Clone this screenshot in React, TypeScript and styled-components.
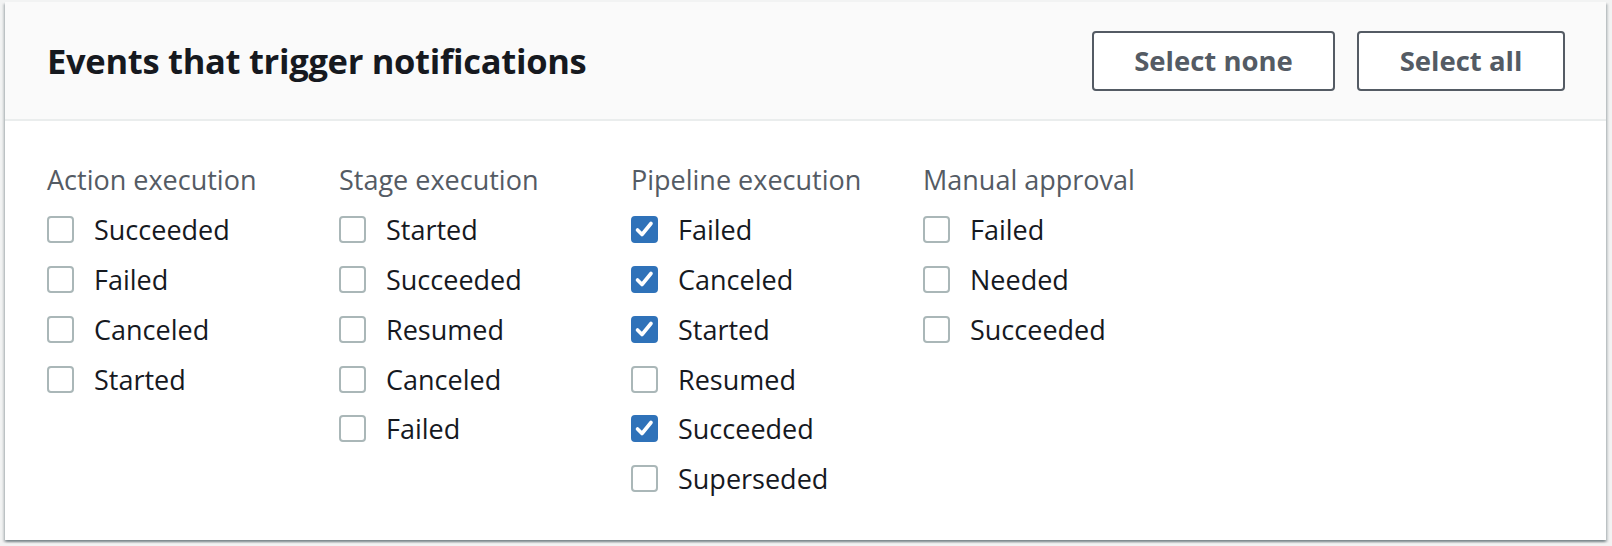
import styled, { createGlobalStyle } from "styled-components";

const GlobalStyle = createGlobalStyle`
  html, body {
    margin: 0;
    padding: 0;
    background: #f2f3f3;
  }
  body {
    font-family: "Open Sans", "Noto Sans", "Liberation Sans", Arial, sans-serif;
    -webkit-font-smoothing: antialiased;
  }
`;

interface EventGroup {
  title: string;
  events: { label: string; checked: boolean }[];
}

const groups: EventGroup[] = [
  {
    title: "Action execution",
    events: [
      { label: "Succeeded", checked: false },
      { label: "Failed", checked: false },
      { label: "Canceled", checked: false },
      { label: "Started", checked: false },
    ],
  },
  {
    title: "Stage execution",
    events: [
      { label: "Started", checked: false },
      { label: "Succeeded", checked: false },
      { label: "Resumed", checked: false },
      { label: "Canceled", checked: false },
      { label: "Failed", checked: false },
    ],
  },
  {
    title: "Pipeline execution",
    events: [
      { label: "Failed", checked: true },
      { label: "Canceled", checked: true },
      { label: "Started", checked: true },
      { label: "Resumed", checked: false },
      { label: "Succeeded", checked: true },
      { label: "Superseded", checked: false },
    ],
  },
  {
    title: "Manual approval",
    events: [
      { label: "Failed", checked: false },
      { label: "Needed", checked: false },
      { label: "Succeeded", checked: false },
    ],
  },
];

const Page = styled.div`
  padding: 2px 6px 6px 5px;
`;

const Card = styled.section`
  height: 538px;
  box-sizing: border-box;
  background: #ffffff;
  box-shadow: 0 2px 2px 0 rgba(0, 28, 36, 0.3),
    2px 2px 2px 0 rgba(0, 28, 36, 0.15), -2px 2px 2px 0 rgba(0, 28, 36, 0.15);
  display: flex;
  flex-direction: column;
`;

const Header = styled.header`
  display: flex;
  align-items: center;
  justify-content: space-between;
  height: 119px;
  box-sizing: border-box;
  padding: 0 41px 0 42px;
  background: #fafafa;
  border-bottom: 2px solid #eaeded;
`;

const Title = styled.h2`
  margin: 0;
  font-size: 34.5px;
  font-weight: 700;
  color: #16191f;
  letter-spacing: -0.3px;
`;

const Actions = styled.div`
  display: flex;
  gap: 22px;
`;

const Button = styled.button<{ $width: number }>`
  width: ${(p) => p.$width}px;
  height: 60px;
  box-sizing: border-box;
  border: 2px solid #545b64;
  border-radius: 4px;
  background: #ffffff;
  color: #545b64;
  font-family: inherit;
  font-size: 27.5px;
  font-weight: 700;
  cursor: pointer;
`;

const Body = styled.div`
  display: grid;
  grid-template-columns: repeat(4, 292px);
  padding: 34px 42px;
`;

const Column = styled.div`
  display: flex;
  flex-direction: column;
`;

const GroupTitle = styled.div`
  height: 49.8px;
  display: flex;
  align-items: center;
  font-size: 27px;
  color: #545b64;
`;

const Item = styled.label`
  height: 49.8px;
  display: flex;
  align-items: center;
  gap: 20px;
  font-size: 27px;
  color: #16191f;
`;

const Box = styled.span<{ $checked: boolean }>`
  width: 27px;
  height: 27px;
  box-sizing: border-box;
  border-radius: 4px;
  border: 2px solid ${(p) => (p.$checked ? "#2f72b9" : "#aab7b8")};
  background: ${(p) => (p.$checked ? "#2f72b9" : "#ffffff")};
  display: flex;
  align-items: center;
  justify-content: center;
  flex-shrink: 0;
`;

function Checkbox({ checked }: { checked: boolean }) {
  return (
    <Box $checked={checked}>
      {checked && (
        <svg width="21" height="21" viewBox="0 0 21 21">
          <path
            d="M3.5 11 L8 15.5 L17 4.5"
            fill="none"
            stroke="#ffffff"
            strokeWidth="3.6"
            strokeLinecap="round"
            strokeLinejoin="round"
          />
        </svg>
      )}
    </Box>
  );
}

export default function App() {
  return (
    <>
      <GlobalStyle />
      <Page>
        <Card>
          <Header>
            <Title>Events that trigger notifications</Title>
            <Actions>
              <Button $width={243}>Select none</Button>
              <Button $width={208}>Select all</Button>
            </Actions>
          </Header>
          <Body>
            {groups.map((group) => (
              <Column key={group.title}>
                <GroupTitle>{group.title}</GroupTitle>
                {group.events.map((event) => (
                  <Item key={event.label}>
                    <Checkbox checked={event.checked} />
                    {event.label}
                  </Item>
                ))}
              </Column>
            ))}
          </Body>
        </Card>
      </Page>
    </>
  );
}
